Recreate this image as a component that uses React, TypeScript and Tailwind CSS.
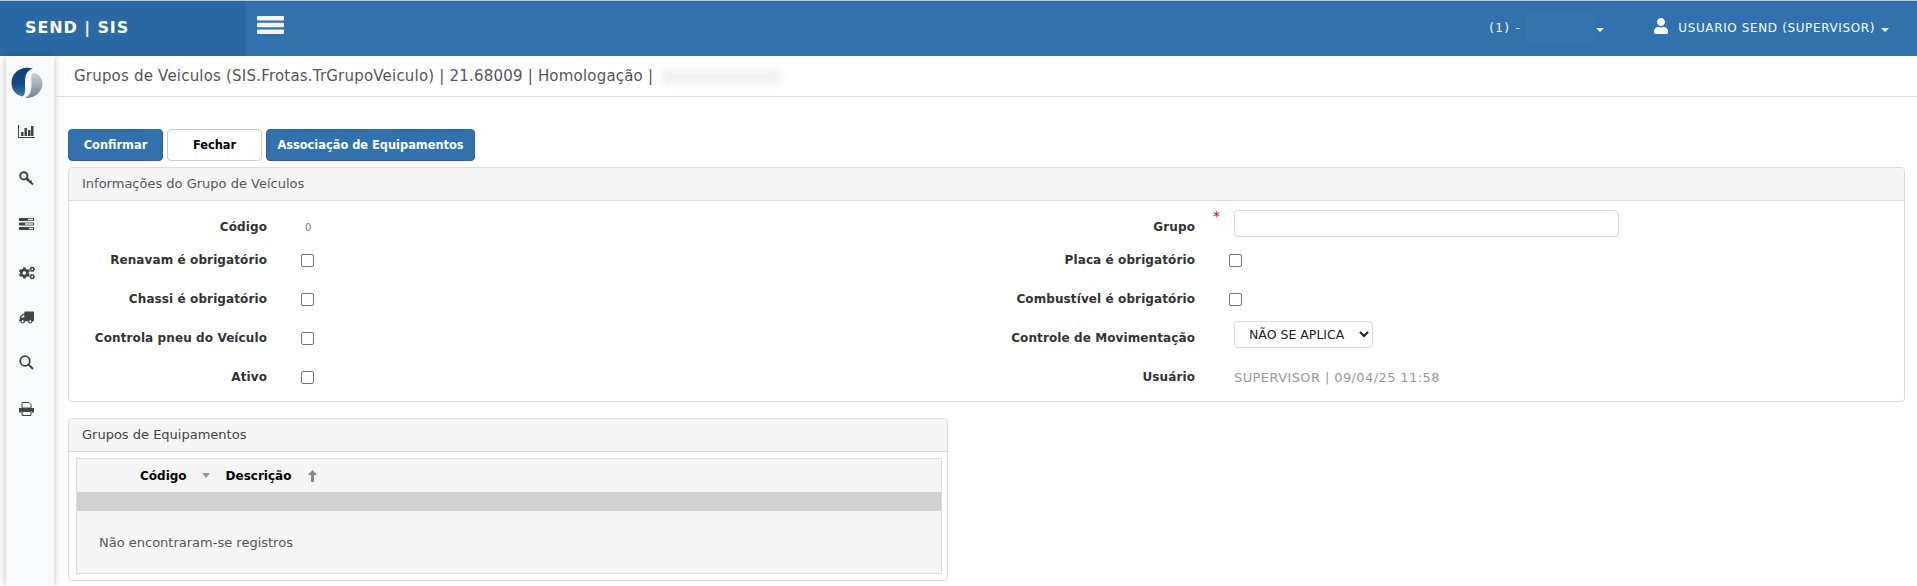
import React from 'react';
import { FaCogs, FaTruck, FaUser } from 'react-icons/fa';

const Logo = () => (
    <svg width="32" height="32" viewBox="0 0 32 32">
        <defs>
            <linearGradient id="logoBlue" x1="0" y1="0" x2="0" y2="1">
                <stop offset="0" stopColor="#0d3f7a" />
                <stop offset="0.55" stopColor="#104a85" />
                <stop offset="1" stopColor="#3a7ba6" />
            </linearGradient>
            <linearGradient id="logoGrey" x1="0" y1="0" x2="0" y2="1">
                <stop offset="0" stopColor="#c9d0d4" />
                <stop offset="1" stopColor="#6d8796" />
            </linearGradient>
        </defs>
        <path d="M22 1.5 C12 -1.5 0.5 4 0.5 16 C0.5 22 4 27.5 11 29.5 C15 28 14 23 14 17 C14 9 15 3.5 22 1.5Z" fill="url(#logoBlue)" />
        <path d="M22 6 C28 7 31.5 11 31.5 16 C31.5 25 24 31.5 14 31 C19 28.5 20.5 24 20.5 17 C20.5 12 19.5 8 22 6Z" fill="url(#logoGrey)" />
    </svg>
);

const ChartIcon = () => (
    <svg width="17" height="13" viewBox="0 0 17 13" fill="#444444">
        <rect x="0" y="0" width="1" height="13" />
        <rect x="0" y="12" width="17" height="1" />
        <rect x="3" y="7" width="2.5" height="4" />
        <rect x="6.5" y="3" width="2.5" height="8" />
        <rect x="10" y="5" width="2.5" height="6" />
        <rect x="13" y="1" width="2.5" height="10" />
    </svg>
);

const KeyIcon = () => (
    <svg width="15" height="15" viewBox="0 0 15 15" fill="none" stroke="#444444">
        <circle cx="4.8" cy="4.8" r="3.6" strokeWidth="2" />
        <path d="M7.5 7.5 L14 13.5" strokeWidth="1.8" />
        <path d="M10 7.5 L8 10 M12.5 9.5 L10.5 12" strokeWidth="1.4" />
    </svg>
);

const TasksIcon = () => (
    <svg width="15" height="12" viewBox="0 0 15 12" fill="#444444">
        <rect x="0" y="0" width="15" height="3" />
        <rect x="0" y="4.5" width="15" height="3" />
        <rect x="0" y="9" width="15" height="3" />
        <rect x="9" y="0.8" width="5" height="1.4" fill="#f8f9fb" />
        <rect x="6" y="5.3" width="8" height="1.4" fill="#f8f9fb" />
        <rect x="10" y="9.8" width="4" height="1.4" fill="#f8f9fb" />
    </svg>
);

const SearchIcon = () => (
    <svg width="15" height="15" viewBox="0 0 15 15" fill="none" stroke="#444444">
        <circle cx="6" cy="6" r="4.8" strokeWidth="1.8" />
        <path d="M9.5 9.5 L14 14" strokeWidth="2" />
    </svg>
);

const PrintIcon = () => (
    <svg width="15" height="14" viewBox="0 0 15 14" fill="#444444">
        <path d="M3 0.5 H10 L12 2.5 V6 H3Z" fill="none" stroke="#444444" />
        <path d="M0 6 H15 V10.5 H12.5 V9 H2.5 V10.5 H0Z" />
        <path d="M3 9.5 H12 V13.5 H3Z" fill="none" stroke="#444444" />
    </svg>
);

const Caret = () => <span className="inline-block border-x-[4px] border-t-[4px] border-x-transparent border-t-white" />;

const Check = () => <input type="checkbox" className="w-[13px] h-[13px] m-0 mt-[2px] appearance-none bg-white border border-[#767676] rounded-[2px]" />;

const Label = ({ children }: { children: React.ReactNode }) => (
    <span className="font-bold text-[#333333] tracking-[0.1px]">{children}</span>
);

const rows: { left: string; right: string; control: React.ReactNode; rightControl: React.ReactNode; h: string }[] = [
    {
        left: 'Código',
        right: 'Grupo',
        h: 'h-[27px]',
        control: <span className="text-[10px] text-[#777777] ml-[4px] mt-[7px]">0</span>,
        rightControl: <input className="ml-[5px] w-[385px] h-[27px] bg-white border border-[#dddddd] rounded-[4px]" />,
    },
    { left: 'Renavam é obrigatório', right: 'Placa é obrigatório', h: 'h-[33px]', control: <Check />, rightControl: <Check /> },
    { left: 'Chassi é obrigatório', right: 'Combustível é obrigatório', h: 'h-[33px]', control: <Check />, rightControl: <Check /> },
    {
        left: 'Controla pneu do Veículo',
        right: 'Controle de Movimentação',
        h: 'h-[33px]',
        control: <Check />,
        rightControl: (
            <select className="ml-[5px] -mt-[6px] w-[139px] h-[27px] pl-[10px] text-[12.5px] text-[#222222] bg-white border border-[#dddddd] rounded-[4px]">
                <option>NÃO SE APLICA</option>
            </select>
        ),
    },
    {
        left: 'Ativo',
        right: 'Usuário',
        h: 'h-[33px]',
        control: <Check />,
        rightControl: <span className="ml-[5px] mt-[3px] text-[13px] tracking-[0.4px] text-[#999999]">SUPERVISOR | 09/04/25 11:58</span>,
    },
];

const RailIcon = ({ children, h }: { children: React.ReactNode; h: string }) => (
    <div className={`${h} flex items-center justify-center`}>{children}</div>
);

export default function App() {
    return (
        <div className="h-[586px] w-[1917px] overflow-hidden bg-white text-[12px] text-[#333333] font-['DejaVu_Sans',sans-serif]">
            {/* Top bar */}
            <header className="h-[56px] flex items-stretch bg-[#3071ae] border-t border-[#c8c8c8] text-white">
                <div className="w-[246px] bg-[#2a69a5] pl-[25px] pb-[1px] flex items-center text-[16px] font-bold tracking-[0.9px] whitespace-pre">SEND | SIS</div>
                <div className="pl-[11px] pt-[15px]">
                    <svg width="27" height="18" viewBox="0 0 27 18" fill="#f4f7fa">
                        <rect x="0" y="0" width="27" height="4.5" rx="1" />
                        <rect x="0" y="6.8" width="27" height="4.5" rx="1" />
                        <rect x="0" y="13.5" width="27" height="4.5" rx="1" />
                    </svg>
                </div>
                <div className="ml-auto flex items-center pr-[28px] pb-[2px]">
                    <span className="tracking-[1.4px]">(1) -</span>
                    <span className="w-[68px] h-[29px] ml-[4px] bg-[#3675b2] blur-[1px]" />
                    <span className="ml-[3px] mr-[49px]"><Caret /></span>
                    <FaUser size={16} className="mr-[9px] mb-[3px]" />
                    <span className="tracking-[0.62px]">USUARIO SEND (SUPERVISOR)</span>
                    <span className="ml-[6px]"><Caret /></span>
                </div>
            </header>

            <div className="flex h-[530px]">
                {/* Icon rail */}
                <aside className="ml-[6px] w-[48px] shrink-0 bg-[#f8f9fb] shadow-[0_0_8px_rgba(0,0,0,0.25)] flex flex-col items-center text-[#444444] pt-[11px] pr-[7px]">
                    <Logo />
                    <div className="h-[26px]" />
                    <RailIcon h="h-[13px]"><ChartIcon /></RailIcon>
                    <div className="h-[33px]" />
                    <RailIcon h="h-[15px]"><KeyIcon /></RailIcon>
                    <div className="h-[32px]" />
                    <RailIcon h="h-[12px]"><TasksIcon /></RailIcon>
                    <div className="h-[35px]" />
                    <RailIcon h="h-[15px]"><FaCogs size={16} /></RailIcon>
                    <div className="h-[32px]" />
                    <RailIcon h="h-[11px]"><FaTruck size={15} className="-scale-x-100" /></RailIcon>
                    <div className="h-[32px]" />
                    <RailIcon h="h-[15px]"><SearchIcon /></RailIcon>
                    <div className="h-[32px]" />
                    <RailIcon h="h-[14px]"><PrintIcon /></RailIcon>
                </aside>

                <main className="flex-1 min-w-0">
                    <div className="h-[41px] border-b border-[#dddddd] pl-[20px] pt-[1px] flex items-center text-[15px] tracking-[0.2px] text-[#555555]">
                        <span>Grupos de Veiculos (SIS.Frotas.TrGrupoVeiculo) | 21.68009 | Homologação |</span>
                        <span className="ml-[8px] w-[120px] h-[14px] bg-[#f0f0f0] blur-[4px]" />
                    </div>

                    <div className="pl-[14px] pr-[12px] pt-[32px]">
                        <div className="flex gap-[4px] font-bold text-[11.4px]">
                            <button className="w-[95px] h-[32px] pt-[1px] bg-[#3071ae] text-white border border-[#2a6496] rounded-[4px]">Confirmar</button>
                            <button className="w-[95px] h-[32px] pt-[1px] bg-white text-black border border-[#cccccc] rounded-[4px]">Fechar</button>
                            <button className="w-[209px] h-[32px] pt-[1px] bg-[#3071ae] text-white border border-[#2a6496] rounded-[4px]">Associação de Equipamentos</button>
                        </div>

                        <section className="mt-[6px] h-[235px] border border-[#dddddd] rounded-[4px]">
                            <div className="h-[33px] bg-[#f5f5f5] border-b border-[#dddddd] pl-[13px] flex items-center text-[13px] text-[#555555] rounded-t-[4px]">Informações do Grupo de Veículos</div>
                            <div className="pt-[9px] flex flex-col gap-[6px]">
                                {rows.map((r) => (
                                    <div key={r.left} className={`flex items-center ${r.h}`}>
                                        <div className={`w-[198px] text-right shrink-0 ${r.left === 'Código' ? 'mt-[7px]' : ''}`}><Label>{r.left}</Label></div>
                                        <div className="ml-[34px] w-[694px] shrink-0 flex items-center">{r.control}</div>
                                        <div className={`w-[200px] text-right shrink-0 relative ${r.left === 'Código' ? 'mt-[7px]' : ''}`}>
                                            <Label>{r.right}</Label>
                                            {r.right === 'Grupo' && <span className="absolute left-[218px] top-[-12px] text-[#dd0000] text-[14px]">*</span>}
                                        </div>
                                        <div className="ml-[34px] flex items-center">{r.rightControl}</div>
                                    </div>
                                ))}
                            </div>
                        </section>

                        <section className="mt-[16px] w-[880px] h-[163px] border border-[#dddddd] rounded-[4px]">
                            <div className="h-[33px] bg-[#f5f5f5] border-b border-[#dddddd] pl-[13px] flex items-center text-[13px] text-[#444444] rounded-t-[4px]">Grupos de Equipamentos</div>
                            <div className="ml-[7px] mr-[5px] mt-[6px] h-[116px] border border-[#dddddd] bg-[#f5f5f5]">
                                <div className="h-[33px] flex items-center font-bold text-black">
                                    <span className="ml-[63px]">Código</span>
                                    <span className="ml-[15px] border-x-[4px] border-t-[5px] border-x-transparent border-t-[#999999]" />
                                    <span className="ml-[16px]">Descrição</span>
                                    <svg className="ml-[17px]" width="9" height="12" viewBox="0 0 9 12" fill="#888888">
                                        <path d="M4.5 0 L9 5 H6 V12 H3 V5 H0Z" />
                                    </svg>
                                </div>
                                <div className="h-[19px] bg-[#d1d1d1]" />
                                <div className="pl-[22px] pt-[22px] text-[13px] text-[#555555]">Não encontraram-se registros</div>
                            </div>
                        </section>
                    </div>
                </main>
            </div>
        </div>
    );
}
